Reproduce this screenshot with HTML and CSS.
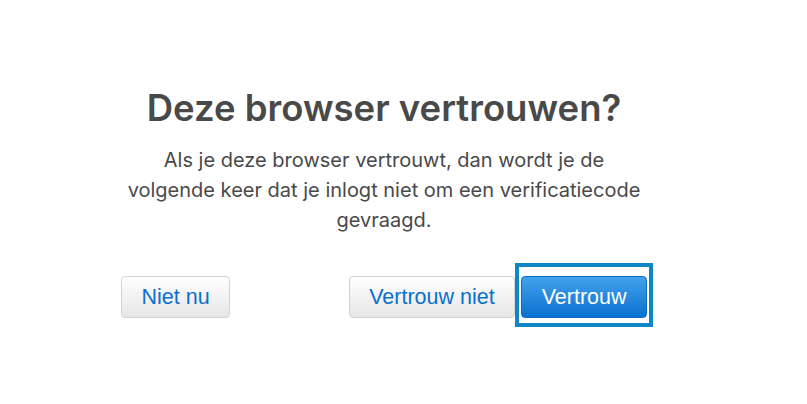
FILE: index.html
```html
<!DOCTYPE html>
<html lang="nl">
<head>
    <meta charset="UTF-8">
    <meta name="viewport" content="width=device-width, initial-scale=1.0">
    <title>Deze browser vertrouwen?</title>
    <link rel="stylesheet" href="styles.css">
</head>
<body>
    <div class="container">
        <h1>Deze browser vertrouwen?</h1>
        <p class="intro">Als je deze browser vertrouwt, dan wordt je de volgende keer dat je inlogt niet om een verificatiecode gevraagd.</p>

        <div class="actions">
            <button class="btn">Niet nu</button>
            <div class="actions-right">
                <button class="btn">Vertrouw niet</button>
                <span class="focus-ring">
                    <button class="btn btn-primary">Vertrouw</button>
                </span>
            </div>
        </div>
    </div>
</body>
</html>
```

FILE: styles.css
```css
body {
    font-family: Inter, "Noto Sans", sans-serif;
    background-color: #ffffff;
    color: #494949;
    margin: 0;
    padding: 0;
    min-height: 404px;
}

.container {
    width: 526px;
    margin-left: 121px;
    padding-top: 85px;
}

h1 {
    font-size: 36.5px;
    line-height: 46px;
    font-weight: 600;
    text-align: center;
    margin: 0;
}

.intro {
    font-size: 20px;
    line-height: 30px;
    text-align: center;
    margin: 14px 0 0;
}

.actions {
    display: flex;
    justify-content: space-between;
    align-items: flex-start;
    margin-top: 41px;
    padding-bottom: 20px;
}

.actions-right {
    display: flex;
    align-items: flex-start;
    gap: 6px;
}

.btn {
    font-family: "Liberation Sans", Arial, sans-serif;
    font-size: 21.5px;
    line-height: 40px;
    height: 42px;
    padding: 0 19.5px;
    color: #0b70cc;
    background: linear-gradient(#ffffff, #e6e6e6);
    border: 1px solid #d2d2d2;
    border-radius: 4px;
    cursor: pointer;
}

.btn-primary {
    color: #ffffff;
    background: linear-gradient(#42a1ec, #0a71d0);
    border-color: #0b6cc4;
}

/* keyboard focus highlight around the default action;
   negative margins keep the button where it would sit without it */
.focus-ring {
    display: flex;
    padding: 9px 2px 5px;
    margin: -9px -2px -5px;
    outline: 4px solid #0f87c6;
}
```
